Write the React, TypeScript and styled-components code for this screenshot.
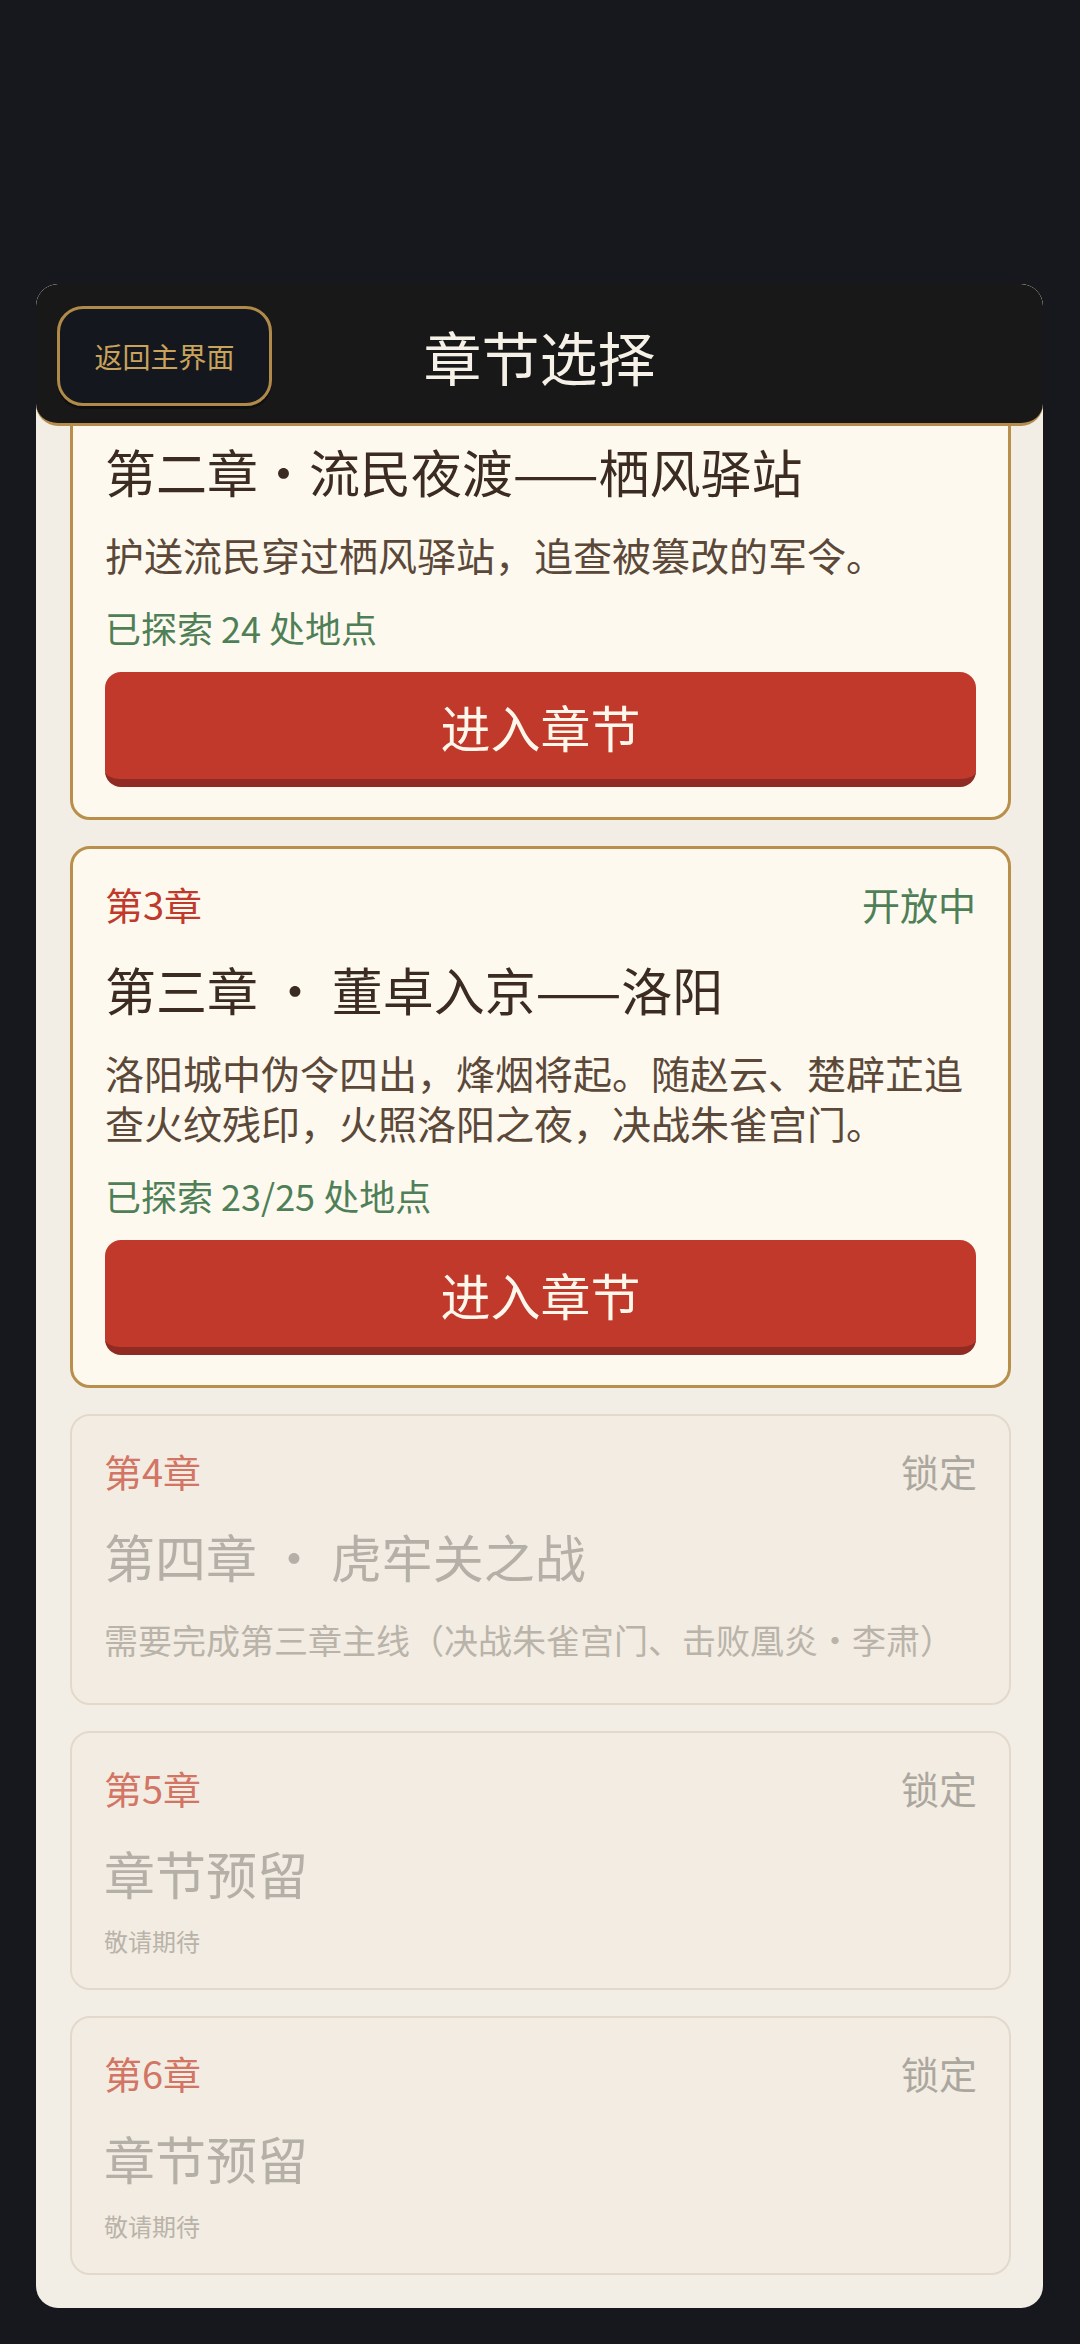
import { FC, useLayoutEffect, useRef } from 'react';
import styled, { createGlobalStyle } from 'styled-components';

const GlobalStyle = createGlobalStyle`
    html, body {
        margin: 0;
        padding: 0;
        background: #16181e;
    }

    body {
        font-family: "Noto Sans CJK SC", "Noto Sans", sans-serif;
    }

    * {
        box-sizing: border-box;
    }
`;

const Screen = styled.div`
    width: 1080px;
    height: 2344px;
    padding: 284px 37px 36px 36px;
    background: #16181e;
    display: flex;
`;

const Panel = styled.main`
    flex: 1;
    position: relative;
    background: #f3eee5;
    border-radius: 22px;
    overflow-y: auto;
    scrollbar-width: none;

    &::-webkit-scrollbar {
        display: none;
    }
`;

const Header = styled.header`
    position: sticky;
    top: 0;
    z-index: 2;
    height: 142px;
    padding: 4px 21px 0;
    display: grid;
    grid-template-columns: 1fr auto 1fr;
    align-items: center;
    background: #181818;
    border-bottom: 3px solid #b48d4c;
    border-radius: 22px;
`;

const BackButton = styled.button`
    justify-self: start;
    width: 215px;
    height: 100px;
    border: 3px solid #b08a48;
    border-radius: 26px;
    background: #15171e;
    color: #c9a35c;
    font-family: inherit;
    font-size: 28px;
    box-shadow: 0 3px 0 rgba(0, 0, 0, 0.35);
`;

const Title = styled.h1`
    margin: 0;
    color: #f6f1e7;
    font-size: 58px;
    font-weight: 400;
`;

const ChapterList = styled.div`
    display: flex;
    flex-direction: column;
    gap: 26px;
    padding: 26px 32px 40px 34px;
`;

const Card = styled.article<{ $locked?: boolean }>`
    padding: 30px 32px;
    border-radius: 20px;
    background: ${({ $locked }) => ($locked ? '#f2ece2' : '#fdf9ef')};
    border: ${({ $locked }) => ($locked ? '2px solid #e2d9cc' : '3px solid #b8904c')};
`;

const CardTop = styled.div`
    display: flex;
    justify-content: space-between;
    align-items: center;
    font-size: 38px;
    line-height: 50px;
`;

const ChapterNo = styled.span<{ $locked?: boolean }>`
    color: ${({ $locked }) => ($locked ? '#d27565' : '#c0392b')};
`;

const Status = styled.span<{ $locked?: boolean }>`
    color: ${({ $locked }) => ($locked ? '#aca79e' : '#4f7f57')};
`;

const ChapterTitle = styled.h2<{ $locked?: boolean }>`
    margin: 28px 0 0;
    font-size: 51px;
    line-height: 65px;
    font-weight: 400;
    white-space: nowrap;
    color: ${({ $locked }) => ($locked ? '#b5b0a7' : '#3b2b21')};
`;

const Description = styled.p`
    margin: 25px 0 0;
    font-size: 39px;
    line-height: 50px;
    color: #5b4838;
`;

const Explored = styled.p`
    margin: 24px 0 0;
    font-size: 36px;
    line-height: 48px;
    color: #4f7f57;
`;

const EnterButton = styled.button`
    display: block;
    width: 100%;
    height: 115px;
    margin-top: 21px;
    border: none;
    border-bottom: 8px solid #8f2b22;
    border-radius: 16px;
    background: #c0392b;
    color: #fff7ec;
    font-family: inherit;
    font-size: 50px;
`;

const LockNote = styled.p<{ $small?: boolean }>`
    margin: ${({ $small }) => ($small ? '18px 0 0' : '27px 0 9px')};
    font-size: ${({ $small }) => ($small ? '24px' : '34px')};
    line-height: ${({ $small }) => ($small ? '34px' : '48px')};
    color: #b9b3a9;
    white-space: nowrap;
`;

interface Chapter {
    no: number;
    title: string;
    status: string;
    locked: boolean;
    description?: string;
    explored?: string;
    note?: string;
    small?: boolean;
}

const chapters: Chapter[] = [
    {
        no: 2,
        title: '第二章·流民夜渡——栖风驿站',
        status: '开放中',
        locked: false,
        description: '护送流民穿过栖风驿站，追查被篡改的军令。',
        explored: '已探索 24 处地点',
    },
    {
        no: 3,
        title: '第三章 · 董卓入京——洛阳',
        status: '开放中',
        locked: false,
        description: '洛阳城中伪令四出，烽烟将起。随赵云、楚辟芷追查火纹残印，火照洛阳之夜，决战朱雀宫门。',
        explored: '已探索 23/25 处地点',
    },
    {
        no: 4,
        title: '第四章 · 虎牢关之战',
        status: '锁定',
        locked: true,
        note: '需要完成第三章主线（决战朱雀宫门、击败凰炎·李肃）',
    },
    { no: 5, title: '章节预留', status: '锁定', locked: true, note: '敬请期待', small: true },
    { no: 6, title: '章节预留', status: '锁定', locked: true, note: '敬请期待', small: true },
];

const App: FC = () => {
    const panelRef = useRef<HTMLElement>(null);
    const anchorRef = useRef<HTMLElement>(null);

    // the list is scrolled so chapter 2 sits half under the header
    useLayoutEffect(() => {
        if (panelRef.current && anchorRef.current) {
            panelRef.current.scrollTop = anchorRef.current.offsetTop - 44;
        }
    }, []);

    return (
        <Screen>
            <GlobalStyle />
            <Panel ref={panelRef}>
                <Header>
                    <BackButton>返回主界面</BackButton>
                    <Title>章节选择</Title>
                    <span />
                </Header>
                <ChapterList>
                    {chapters.map((chapter) => (
                        <Card
                            key={chapter.no}
                            $locked={chapter.locked}
                            ref={chapter.no === 2 ? anchorRef : undefined}
                        >
                            <CardTop>
                                <ChapterNo $locked={chapter.locked}>第{chapter.no}章</ChapterNo>
                                <Status $locked={chapter.locked}>{chapter.status}</Status>
                            </CardTop>
                            <ChapterTitle $locked={chapter.locked}>{chapter.title}</ChapterTitle>
                            {chapter.locked ? (
                                <LockNote $small={chapter.small}>{chapter.note}</LockNote>
                            ) : (
                                <>
                                    <Description>{chapter.description}</Description>
                                    <Explored>{chapter.explored}</Explored>
                                    <EnterButton>进入章节</EnterButton>
                                </>
                            )}
                        </Card>
                    ))}
                </ChapterList>
            </Panel>
        </Screen>
    );
};

export default App;
